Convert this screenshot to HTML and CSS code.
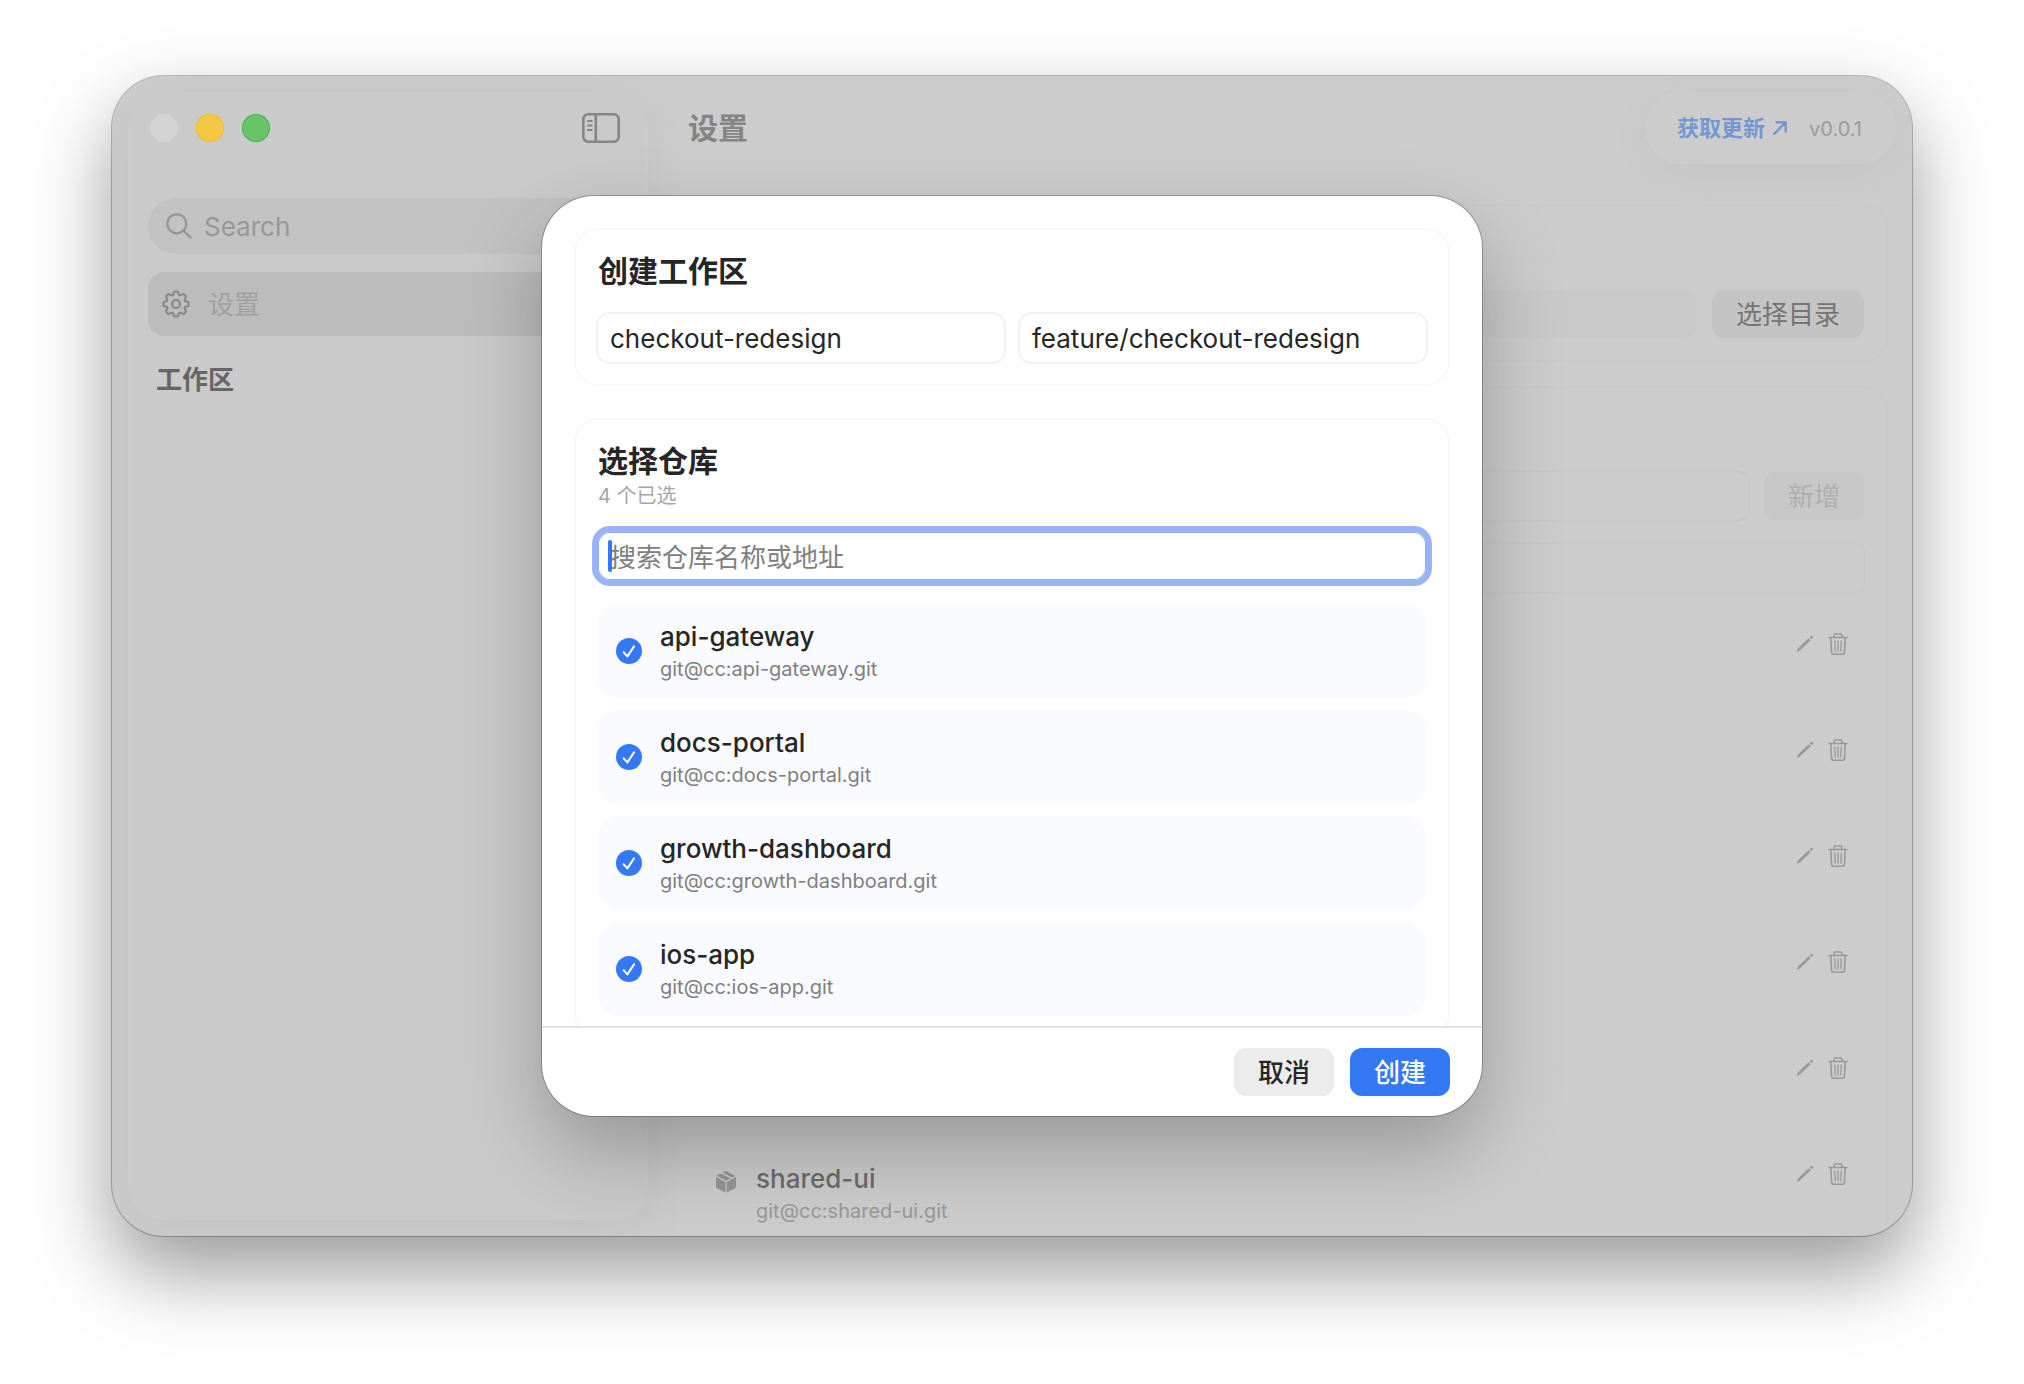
FILE: index.html
```html
<!DOCTYPE html>
<html lang="zh-CN">
<head>
<meta charset="utf-8">
<meta name="viewport" content="width=device-width, initial-scale=1">
<title>设置</title>
<link rel="stylesheet" href="styles.css">
</head>
<body>
<svg class="sprite" aria-hidden="true">
  <symbol id="pencil" viewBox="0 0 18 18">
    <path d="M12.600 3.200 L14.600 5.200 L4.200 15.300 L1.300 16.700 Q.5 16.900 .8 16.100 L2.200 13.300 Z" fill="currentColor"/>
    <path d="M13.700 2.300 L14.900 1.200 Q15.900 .5 16.700 1.300 Q17.400 2.200 16.700 3.100 L15.600 4.200 Z" fill="currentColor"/>
  </symbol>
  <symbol id="trash" viewBox="0 0 20 22">
    <g fill="none" stroke="currentColor" stroke-width="1.600" stroke-linecap="round" stroke-linejoin="round">
      <path d="M1 4.500 H19 M6 4.300 V2.500 Q6 1 7.500 1 H12.500 Q14 1 14 2.500 V4.300"/>
      <path d="M2.800 4.700 L3.500 19 Q3.600 21.200 5.600 21.200 H14.400 Q16.400 21.200 16.500 19 L17.200 4.700"/>
      <path d="M6.800 7.800 L7.100 18 M10 7.800 V18 M13.200 7.800 L12.900 18" stroke-width="1.300"/>
    </g>
  </symbol>
  <symbol id="check" viewBox="0 0 26 26">
    <path d="M7.600 14.300 L11.400 18.400 L18 8.400" fill="none" stroke="#fff" stroke-width="2" stroke-linecap="round" stroke-linejoin="round"/>
  </symbol>
</svg>

<main class="window">
  <aside class="sidebar">
    <div class="sidebar-top">
      <div class="lights">
        <button class="light light-close" aria-label="关闭"></button>
        <button class="light light-min" aria-label="最小化"></button>
        <button class="light light-max" aria-label="缩放"></button>
      </div>
      <button class="icon-button toggle" aria-label="切换边栏">
        <svg width="38" height="30" viewBox="0 0 38 30" fill="none" stroke="currentColor" stroke-width="2.600" stroke-linecap="round">
          <rect x="1.300" y="1.300" width="35.400" height="27.400" rx="5"/>
          <path d="M13.800 1.500 V28.500"/>
          <path d="M5.800 8 H9.800 M5.800 12.500 H9.800 M5.800 17 H9.800" stroke-width="1.800"/>
        </svg>
      </button>
    </div>
    <label class="search">
      <svg width="26" height="26" viewBox="0 0 26 26" fill="none" stroke="currentColor" stroke-width="2.200" stroke-linecap="round">
        <circle cx="10.800" cy="10.800" r="9.500"/>
        <path d="M17.800 17.800 L24.600 24.600"/>
      </svg>
      <input class="search-input" type="search" placeholder="Search" aria-label="Search">
    </label>
    <a class="nav-item" href="#settings">
      <svg width="28" height="28" viewBox="-14 -14 28 28" fill="none" stroke="currentColor" stroke-width="2" stroke-linecap="round" stroke-linejoin="round">
        <path id="tooth" d="M-3.800 -8.800 Q-2.700 -9.200 -2.500 -10.200 L-2.200 -11.700 Q-2 -12.600 -1.200 -12.600 H1.200 Q2 -12.600 2.200 -11.700 L2.500 -10.200 Q2.700 -9.200 3.800 -8.800"/>
        <use href="#tooth" transform="rotate(45)"/>
        <use href="#tooth" transform="rotate(90)"/>
        <use href="#tooth" transform="rotate(135)"/>
        <use href="#tooth" transform="rotate(180)"/>
        <use href="#tooth" transform="rotate(225)"/>
        <use href="#tooth" transform="rotate(270)"/>
        <use href="#tooth" transform="rotate(315)"/>
        <circle r="4"/>
      </svg>
      <span>设置</span>
    </a>
    <h2 class="sidebar-heading">工作区</h2>
  </aside>

  <section class="content">
    <header class="toolbar">
      <h1 class="page-title">设置</h1>
      <div class="version">
        <a class="update" href="#update">获取更新
          <svg width="14" height="14" viewBox="0 0 14 14" fill="none" stroke="currentColor" stroke-width="2.400" stroke-linecap="round" stroke-linejoin="round"><path d="M1.200 12.800 L12.600 1.400 M3.600 1.300 H12.700 V10.400"/></svg>
        </a>
        <span class="version-number">v0.0.1</span>
      </div>
    </header>
    <div class="panel">
      <div class="field-row">
        <div class="path"></div>
        <button class="button button-dim">选择目录</button>
      </div>
    </div>
    <div class="panel panel-repos">
      <div class="field-row">
        <input class="field field-dim" type="text" aria-label="仓库名称">
        <button class="button button-dim" disabled>新增</button>
      </div>
      <input class="field field-dim" type="text" aria-label="仓库地址">
      <ul class="repo-list">
        <li class="repo repo-dim"><span class="actions"><button class="icon-button" aria-label="编辑"><svg width="18" height="18"><use href="#pencil"/></svg></button><button class="icon-button" aria-label="删除"><svg width="20" height="22"><use href="#trash"/></svg></button></span></li>
        <li class="repo repo-dim"><span class="actions"><button class="icon-button" aria-label="编辑"><svg width="18" height="18"><use href="#pencil"/></svg></button><button class="icon-button" aria-label="删除"><svg width="20" height="22"><use href="#trash"/></svg></button></span></li>
        <li class="repo repo-dim"><span class="actions"><button class="icon-button" aria-label="编辑"><svg width="18" height="18"><use href="#pencil"/></svg></button><button class="icon-button" aria-label="删除"><svg width="20" height="22"><use href="#trash"/></svg></button></span></li>
        <li class="repo repo-dim"><span class="actions"><button class="icon-button" aria-label="编辑"><svg width="18" height="18"><use href="#pencil"/></svg></button><button class="icon-button" aria-label="删除"><svg width="20" height="22"><use href="#trash"/></svg></button></span></li>
        <li class="repo repo-dim"><span class="actions"><button class="icon-button" aria-label="编辑"><svg width="18" height="18"><use href="#pencil"/></svg></button><button class="icon-button" aria-label="删除"><svg width="20" height="22"><use href="#trash"/></svg></button></span></li>
        <li class="repo repo-dim">
          <svg class="cube" width="24" height="22" viewBox="-2 0 24 22" fill="currentColor">
            <path d="M10 0 L6.500 1.600 L16.200 6.600 L19.400 5 Z M5 2.400 L.6 4.600 L10 9.700 L14.600 7.400 Z"/>
            <path d="M0 6 L9.400 10.900 V21.600 L1.200 17.400 Q0 16.800 0 15.500 Z M20 6 L10.600 10.900 V21.600 L18.800 17.400 Q20 16.800 20 15.500 Z"/>
          </svg>
          <span class="repo-text"><span class="repo-name">shared-ui</span><span class="repo-url">git@cc:shared-ui.git</span></span>
          <span class="actions"><button class="icon-button" aria-label="编辑"><svg width="18" height="18"><use href="#pencil"/></svg></button><button class="icon-button" aria-label="删除"><svg width="20" height="22"><use href="#trash"/></svg></button></span>
        </li>
      </ul>
    </div>
  </section>

  <div class="overlay">
    <form class="sheet" role="dialog" aria-label="创建工作区">
      <div class="sheet-body">
        <section class="card">
          <h2 class="card-title">创建工作区</h2>
          <div class="field-row">
            <input class="field" type="text" value="checkout-redesign" aria-label="工作区名称">
            <input class="field" type="text" value="feature/checkout-redesign" aria-label="分支名称">
          </div>
        </section>
        <section class="card">
          <div class="card-head">
            <h2 class="card-title">选择仓库</h2>
            <p class="card-note">4 个已选</p>
          </div>
          <div class="repo-search">
            <input class="field field-focus" type="text" placeholder="搜索仓库名称或地址" aria-label="搜索仓库名称或地址">
            <span class="caret"></span>
          </div>
          <div class="repo-list">
            <label class="repo repo-pick">
              <span class="tick"><input type="checkbox" checked><svg width="26" height="26"><use href="#check"/></svg></span>
              <span class="repo-text"><span class="repo-name">api-gateway</span><span class="repo-url">git@cc:api-gateway.git</span></span>
            </label>
            <label class="repo repo-pick">
              <span class="tick"><input type="checkbox" checked><svg width="26" height="26"><use href="#check"/></svg></span>
              <span class="repo-text"><span class="repo-name">docs-portal</span><span class="repo-url">git@cc:docs-portal.git</span></span>
            </label>
            <label class="repo repo-pick">
              <span class="tick"><input type="checkbox" checked><svg width="26" height="26"><use href="#check"/></svg></span>
              <span class="repo-text"><span class="repo-name">growth-dashboard</span><span class="repo-url">git@cc:growth-dashboard.git</span></span>
            </label>
            <label class="repo repo-pick">
              <span class="tick"><input type="checkbox" checked><svg width="26" height="26"><use href="#check"/></svg></span>
              <span class="repo-text"><span class="repo-name">ios-app</span><span class="repo-url">git@cc:ios-app.git</span></span>
            </label>
          </div>
        </section>
      </div>
      <footer class="sheet-footer">
        <button class="button" type="button">取消</button>
        <button class="button button-primary" type="submit">创建</button>
      </footer>
    </form>
  </div>
</main>
</body>
</html>
```
FILE: styles.css
```css
*, *::before, *::after { box-sizing: border-box; }

body {
  margin: 0;
  padding: 76px 112px 148px;
  height: 100vh;
  overflow: hidden;
  background: #fff;
  color: #262626;
  font: 26px/32px Inter, "Noto Sans CJK SC", sans-serif;
}

h1, h2, p, ul { margin: 0; padding: 0; }
ul { list-style: none; }
svg { display: block; flex: none; }
a { color: inherit; text-decoration: none; }
input, button { font: inherit; color: inherit; }
button { border: 0; padding: 0; background: none; }
.sprite { position: absolute; width: 0; height: 0; }

/* Window */
.window {
  position: relative;
  display: flex;
  height: 100%;
  border-radius: 52px;
  background: #cccccc;
  box-shadow: 0 0 0 1px rgba(0, 0, 0, .25), 0 36px 80px rgba(0, 0, 0, .4);
  overflow: hidden;
}

/* Sidebar */
.sidebar {
  flex: none;
  width: 520px;
  margin: 16px;
  padding: 20px;
  border-radius: 36px;
  background: #cacaca;
  box-shadow: inset 0 0 0 1px #cccccc, 0 8px 48px rgba(0, 0, 0, .05);
}
.sidebar-top {
  display: flex;
  align-items: center;
  justify-content: space-between;
  height: 32px;
  padding: 0 8px 0 2px;
}
.lights { display: flex; gap: 18px; }
.light { width: 28px; height: 28px; border-radius: 50%; }
.light-close { background: #d4d4d4; }
.light-min { background: #f4c843; box-shadow: inset 0 0 0 1px #efbd30; }
.light-max { background: #66c466; box-shadow: inset 0 0 0 1px #4cb64c; }
.search {
  display: flex;
  align-items: center;
  gap: 12px;
  height: 56px;
  margin: 54px 0 18px;
  padding: 0 18px;
  border-radius: 28px;
  background: #c2c2c2;
  color: #949494;
}
.search-input {
  flex: 1;
  min-width: 0;
  border: 0;
  padding: 2px 0 0;
  background: none;
  outline: 0;
}
.search-input::placeholder { color: #989898; opacity: 1; }
.nav-item {
  display: flex;
  align-items: center;
  gap: 18px;
  height: 64px;
  padding: 0 14px;
  border-radius: 16px;
  background: #bcbcbc;
  color: #a0a0a0;
}
.nav-item svg { color: #868686; }
.nav-item span { padding-top: 2px; }
.sidebar-heading {
  margin: 28px 8px;
  color: #666;
  font-size: 26px;
  line-height: 32px;
}

/* Settings page */
.content {
  flex: 1;
  min-width: 0;
  display: flex;
  flex-direction: column;
  gap: 24px;
  padding: 16px 24px 0 8px;
}
.toolbar {
  display: flex;
  align-items: center;
  justify-content: space-between;
  height: 72px;
  margin: 0 -8px 16px 16px;
}
.page-title { color: #848484; font-size: 30px; line-height: 38px; }
.version {
  display: flex;
  align-items: center;
  gap: 22px;
  height: 72px;
  padding: 0 34px 0 32px;
  border-radius: 36px;
  background: #cccccc;
  box-shadow: 0 10px 48px rgba(0, 0, 0, .04);
  color: #9b9b9b;
  font-size: 20px;
}
.version-number { padding-top: 2px; }
.update {
  display: flex;
  align-items: center;
  gap: 8px;
  color: #7497d0;
  font-size: 22px;
  font-weight: 600;
}
.panel {
  display: flex;
  flex: none;
  flex-direction: column;
  gap: 24px;
  padding: 84px 22px 22px;
  border: 2px solid #cacaca;
  border-radius: 24px;
}
.field-row { display: flex; gap: 16px; }
.path { flex: 1; height: 48px; border-radius: 12px; background: #c9c9c9; }

/* Controls */
.button {
  flex: none;
  height: 48px;
  padding: 2px 24px 0;
  border-radius: 12px;
  background: #ececec;
  font-weight: 500;
}
.button-primary { background: #3478f6; color: #fff; }
.button-dim { background: #c4c4c4; color: #757575; font-weight: 400; }
.button-dim:disabled { background: #c7c7c7; color: #afafaf; }
.icon-button { color: #999; }
.icon-button.toggle { color: #858585; }
.field {
  flex: 1;
  width: 100%;
  min-width: 0;
  height: 48px;
  padding: 0 12px;
  border: 0;
  border-radius: 12px;
  background: #fff;
  box-shadow: 0 0 0 2px #f2f2f2;
  outline: 0;
}
.field-dim { flex: 1 0 48px; background: none; box-shadow: 0 0 0 2px #c8c8c8; }
.field-focus { padding-top: 2px; box-shadow: inset 0 0 0 1px #91adf0, 0 0 0 6px #98b3f7; }
.field-focus::placeholder { color: #808080; opacity: 1; }

/* Repository rows */
.repo-list { display: flex; flex-direction: column; gap: 12px; }
.repo {
  display: flex;
  align-items: center;
  gap: 18px;
  height: 94px;
  padding: 0 18px;
  border-radius: 20px;
}
.repo-text { display: flex; flex-direction: column; }
.repo-name { font-weight: 500; line-height: 36px; }
.repo-url { color: #808080; font-size: 20px; line-height: 28px; }
.repo-pick { background: #fafbff; }
.repo-dim { padding-right: 16px; color: #6c6c6c; }
.repo-dim .repo-url { color: #999; }
.cube { color: #959595; align-self: flex-start; margin-top: 25px; }
.actions { display: flex; align-items: center; gap: 14px; align-self: flex-start; margin: 17px 0 0 auto; }
.tick { display: grid; }
.tick > * { grid-area: 1 / 1; }
.tick input {
  appearance: none;
  width: 26px;
  height: 26px;
  margin: 0;
  border-radius: 50%;
  background: #3478f6;
}

/* Sheet */
.overlay {
  position: absolute;
  inset: 0;
  display: flex;
  justify-content: center;
  padding: 120px 0;
}
.sheet {
  display: flex;
  flex-direction: column;
  width: 940px;
  max-width: 100%;
  border-radius: 52px;
  background: #fff;
  box-shadow: 0 0 0 1px rgba(0, 0, 0, .25), 0 36px 80px rgba(0, 0, 0, .25);
  overflow: hidden;
}
.sheet-body {
  flex: 1;
  min-height: 0;
  display: flex;
  flex-direction: column;
  gap: 32px;
  padding: 32px 32px 0;
  overflow: hidden;
}
.card {
  flex: none;
  display: flex;
  flex-direction: column;
  gap: 24px;
  padding: 22px;
  border: 2px solid #f9f9f9;
  border-radius: 24px;
}
.card-title { font-size: 30px; line-height: 38px; font-weight: 700; }
.card-head { margin-bottom: -2px; }
.card-note { padding-top: 2px; color: #a6a6a6; font-size: 20px; line-height: 28px; }
.repo-search { position: relative; display: flex; }
.caret {
  position: absolute;
  left: 10px;
  top: 8px;
  width: 4px;
  height: 32px;
  border-radius: 2px;
  background: #3478f6;
}
.sheet-footer {
  display: flex;
  justify-content: flex-end;
  gap: 16px;
  padding: 20px 32px;
  border-top: 2px solid #e4e4e4;
}
```
